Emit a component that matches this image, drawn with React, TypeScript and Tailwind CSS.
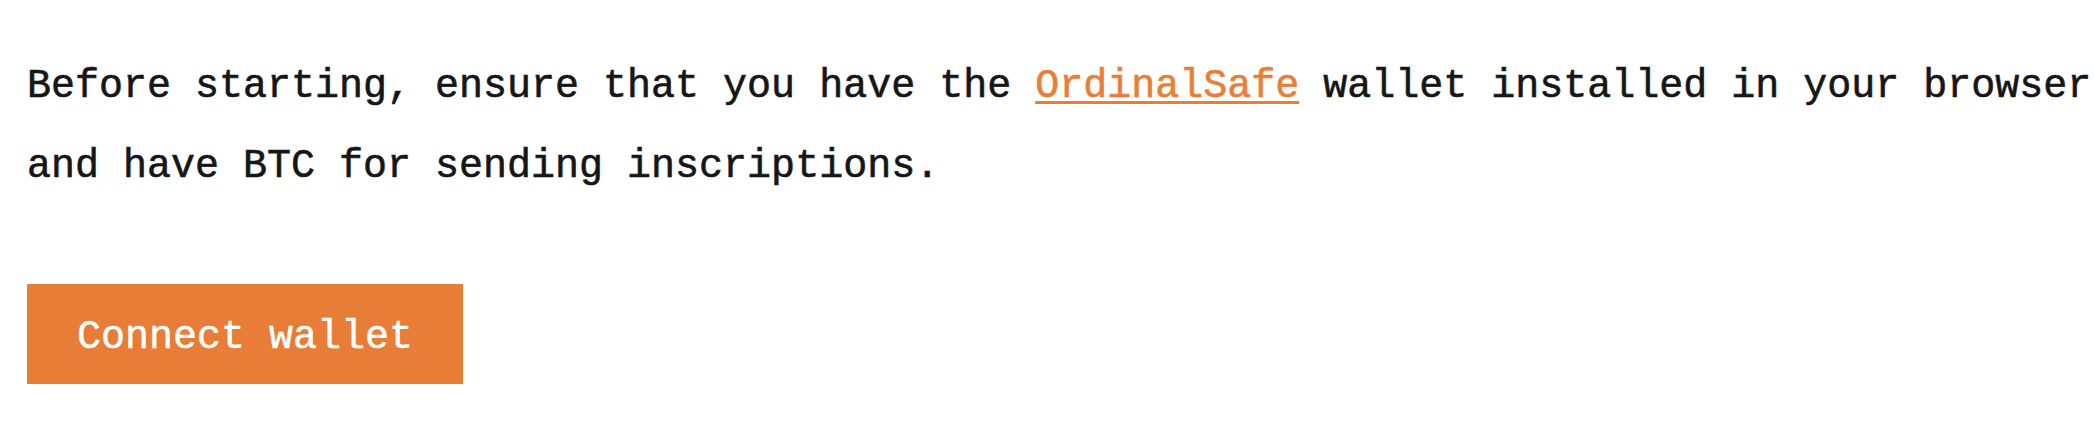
export default function App() {
  return (
    <div className="w-[2094px] h-[448px] bg-white pl-[27px] pt-[47px] font-['Liberation_Mono',monospace] text-[40px] text-[#161616]">
      <p className="leading-[80px] whitespace-nowrap [-webkit-text-stroke:0.6px_#161616]">
        Before starting, ensure that you have the{" "}
        <a
          href="#"
          className="text-[#E97E37] underline decoration-[3px] underline-offset-[4px] [-webkit-text-stroke:0.6px_#E97E37]"
        >
          OrdinalSafe
        </a>{" "}
        wallet installed in your browser
        <br />
        and have BTC for sending inscriptions.
      </p>
      <button className="mt-[77px] h-[100px] w-[436px] pt-[8px] bg-[#E87D37] text-white flex items-center justify-center leading-none [-webkit-text-stroke:0.5px_#ffffff]">
        Connect wallet
      </button>
    </div>
  );
}
